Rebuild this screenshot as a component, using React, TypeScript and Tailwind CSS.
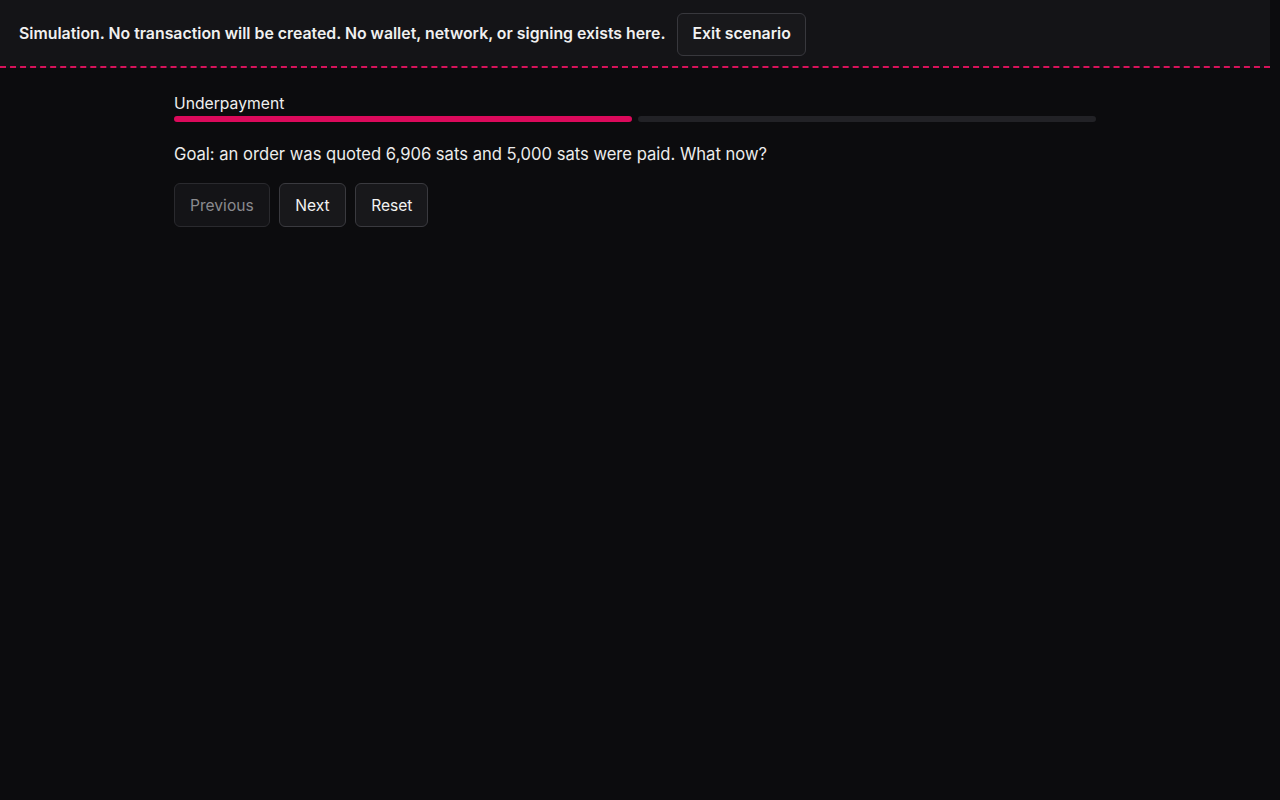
import React from "react";

const steps = ["Underpayment", "Resolution"];

export default function App() {
  const current = 0;

  return (
    <div className="min-h-screen bg-[#0c0c0e] text-[#ededed]" style={{ fontFamily: "Inter, 'Noto Sans', sans-serif" }}>
      <div className="mr-[10px]">
        <header className="flex items-center gap-[12px] bg-[#141417] pl-[19px] pr-5 pt-[2px] h-[68px] border-b-2 border-dashed border-[#d6125a]">
          <p className="text-[15.85px] font-semibold text-[#f0f0f0]">
            Simulation. No transaction will be created. No wallet, network, or signing exists here.
          </p>
          <button className="h-[43px] px-[14px] rounded-md border border-[#38383d] bg-[#18181b] text-[15.8px] font-semibold text-[#f2f2f2]">
            Exit scenario
          </button>
        </header>

        <main className="mx-auto w-[922px] pt-6">
          <div className="text-[15.7px] leading-6 text-[#f0f0f0]">{steps[current]}</div>
          <div className="flex gap-[6px]">
            {steps.map((s, i) => (
              <div
                key={s}
                className={`h-1.5 flex-1 rounded-full ${i <= current ? "bg-[#db0a5b]" : "bg-[#222226]"}`}
              />
            ))}
          </div>
          <p className="mt-[20px] text-[16.6px] leading-6 text-[#ececec]">
            Goal: an order was quoted 6,906 sats and 5,000 sats were paid. What now?
          </p>
          <div className="mt-[17px] flex gap-[9.5px]">
            <button
              disabled
              className="h-11 px-[15px] pt-px rounded-md border border-[#2a2a2e] bg-[#141417] text-[15.6px] text-[#8a8a8e]"
            >
              Previous
            </button>
            <button className="h-11 px-[15px] pt-px rounded-md border border-[#3a3a3f] bg-[#18181b] text-[15.6px] text-[#f2f2f2]">
              Next
            </button>
            <button className="h-11 px-[15px] pt-px rounded-md border border-[#3a3a3f] bg-[#18181b] text-[15.6px] text-[#f2f2f2]">
              Reset
            </button>
          </div>
        </main>
      </div>
    </div>
  );
}
